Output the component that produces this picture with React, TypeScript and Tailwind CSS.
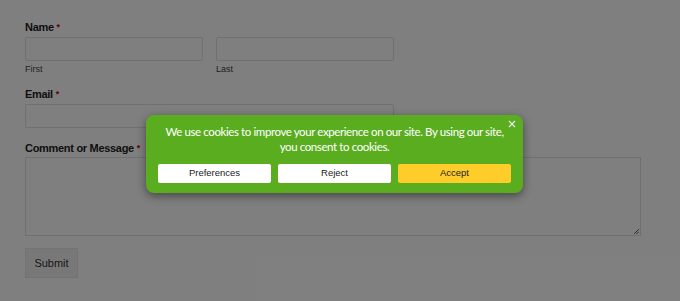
import React from 'react';

const Label: React.FC<{ text: string }> = ({ text }) => (
  <div className="text-[11px] font-bold text-[#222] leading-[14px] tracking-[-0.3px]">
    {text} <span className="text-[#c00] text-[9px] align-top">*</span>
  </div>
);

const App: React.FC = () => {
  return (
    <div className="relative w-[680px] h-[301px] overflow-hidden bg-white" style={{ fontFamily: '"Liberation Sans", Arial, sans-serif' }}>
      <form className="flex flex-col pt-[20px] pl-[25px]">
        <Label text="Name" />
        <div className="flex gap-[13px] mt-[3px]">
          <div className="flex flex-col">
            <div className="w-[178px] h-[24px] border border-[#e0e0e0] rounded-[2px] bg-white" />
            <span className="text-[9px] text-[#444] mt-[3px] leading-[11px]">First</span>
          </div>
          <div className="flex flex-col">
            <div className="w-[178px] h-[24px] border border-[#e0e0e0] rounded-[2px] bg-white" />
            <span className="text-[9px] text-[#444] mt-[3px] leading-[11px]">Last</span>
          </div>
        </div>
        <div className="mt-[12px]">
          <Label text="Email" />
        </div>
        <div className="w-[369px] h-[24px] border border-[#e0e0e0] rounded-[2px] bg-white mt-[3px]" />
        <div className="mt-[13px]">
          <Label text="Comment or Message" />
        </div>
        <div className="relative w-[616px] h-[79px] border border-[#e0e0e0] bg-white mt-[2px]">
          <svg className="absolute right-[1px] bottom-[1px]" width="6" height="6" viewBox="0 0 6 6">
            <path d="M1 6 L6 1 M3.5 6 L6 3.5" stroke="#333" strokeWidth="0.8" />
          </svg>
        </div>
        <div className="mt-[12px] w-[53px] h-[30px] bg-[#f0f0f0] border border-[#e6e6e6] flex items-center justify-center text-[11px] text-[#333]">
          Submit
        </div>
      </form>

      <div className="absolute inset-0 bg-black/50" />

      <div className="absolute left-[146px] top-[115px] w-[377px] h-[78px] rounded-[8px] bg-[#5aad1f] shadow-[0_3px_10px_rgba(0,0,0,0.45)] flex flex-col items-center pt-[9px]">
        <button className="absolute right-[6px] top-[4px] w-[10px] h-[10px] flex items-center justify-center">
          <svg width="8" height="8" viewBox="0 0 8 8">
            <path d="M1 1 L7 7 M7 1 L1 7" stroke="#e8e8e8" strokeWidth="1.3" />
          </svg>
        </button>
        <p className="text-white text-[11.5px] leading-[15px] tracking-[-0.4px] text-center w-[350px]" style={{ fontFamily: 'Lato, "Open Sans", sans-serif' }}>
          We use cookies to improve your experience on our site. By using our site, you consent to cookies.
        </p>
        <div className="flex gap-[7px] mt-[10px]">
          <div className="w-[113px] h-[19px] bg-white rounded-[2px] flex items-center justify-center text-[9.5px] text-[#222]">Preferences</div>
          <div className="w-[113px] h-[19px] bg-white rounded-[2px] flex items-center justify-center text-[9.5px] text-[#222]">Reject</div>
          <div className="w-[113px] h-[19px] bg-[#fecd2a] rounded-[2px] flex items-center justify-center text-[9.5px] text-[#222]">Accept</div>
        </div>
      </div>
    </div>
  );
};

export default App;
